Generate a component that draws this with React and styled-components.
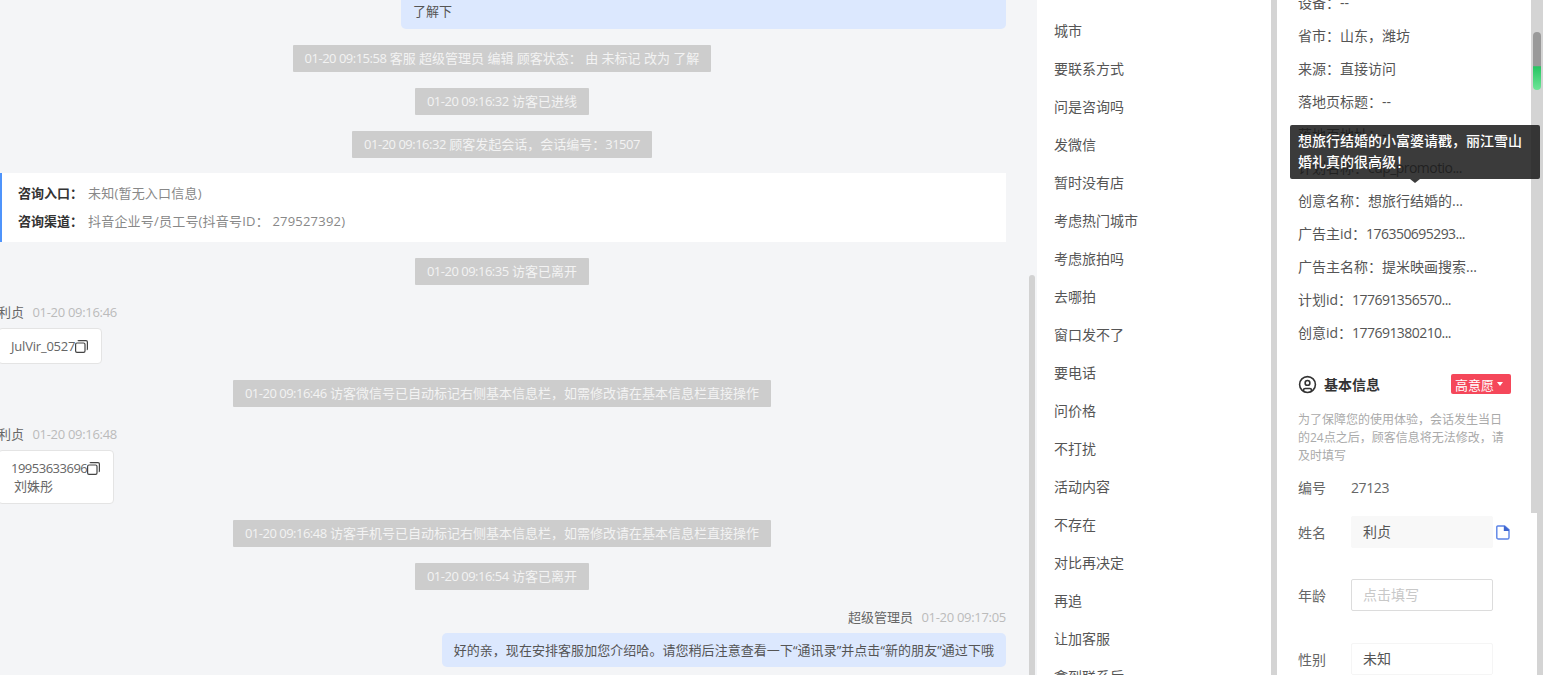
import React from "react";
import styled, { createGlobalStyle } from "styled-components";
import { CircleUser } from "lucide-react";

const TAGS = [
  "城市", "要联系方式", "问是咨询吗", "发微信", "暂时没有店", "考虑热门城市",
  "考虑旅拍吗", "去哪拍", "窗口发不了", "要电话", "问价格", "不打扰",
  "活动内容", "不存在", "对比再决定", "再追", "让加客服", "拿到联系后",
];

const DETAILS = [
  ["设备：", "--"],
  ["省市：", "山东，潍坊"],
  ["来源：", "直接访问"],
  ["落地页标题：", "--"],
  ["落地页地址：", "--"],
  ["计划名称：", "cup_promotio...", true],
  ["创意名称：", "想旅行结婚的..."],
  ["广告主id：", "176350695293...", true],
  ["广告主名称：", "提米映画搜索..."],
  ["计划id：", "177691356570...", true],
  ["创意id：", "177691380210...", true],
];

const CopyIcon = () => (
  <svg width="13" height="13" viewBox="0 0 13 13" fill="none" stroke="#444" strokeWidth="1.2">
    <rect x="0.6" y="3" width="9.4" height="9.4" rx="1.4" />
    <path d="M3 1.2 A0.8 0.8 0 0 1 3.8 0.6 H11 A1.4 1.4 0 0 1 12.4 2 V9 A0.8 0.8 0 0 1 11.8 9.8" />
  </svg>
);

const DocIcon = () => (
  <svg width="14" height="15" viewBox="0 0 14 15" fill="none">
    <path d="M1.8 1 H8.6 L13 4.8 V12.4 A1.6 1.6 0 0 1 11.4 14 H2.4 A1.6 1.6 0 0 1 0.8 12.4 V2 A1 1 0 0 1 1.8 1 Z" stroke="#5b83e6" strokeWidth="1.4" />
    <path d="M7.8 1 V6 H13 V4.8 L8.6 1 Z" fill="#3f66cf" />
  </svg>
);

// the stamp and trailing digits run wider in Open Sans, so they get tightened
const SystemLine = ({ stamp, text, tail }) => (
  <SystemPill>
    <Stamp>{stamp}</Stamp> {text}
    {tail && <Stamp>{tail}</Stamp>}
  </SystemPill>
);

const App = () => {
  return (
    <Page>
      <GlobalStyle />
      <ChatColumn>
        <Feed>
          <AgentBubble $wide>
            您好，这边是我们的活动内容，您可以先
            <br />
            了解下
          </AgentBubble>
          <SystemLine stamp="01-20 09:15:58" text="客服 超级管理员 编辑 顾客状态： 由 未标记 改为 了解" />
          <SystemLine stamp="01-20 09:16:32" text="访客已进线" />
          <SystemLine stamp="01-20 09:16:32" text="顾客发起会话，会话编号：" tail="31507" />
          <ConsultCard>
            <ConsultRow>
              <b>咨询入口：</b>
              <span>未知(暂无入口信息)</span>
            </ConsultRow>
            <ConsultRow>
              <b>咨询渠道：</b>
              <span>抖音企业号/员工号(抖音号ID： 279527392)</span>
            </ConsultRow>
          </ConsultCard>
          <SystemLine stamp="01-20 09:16:35" text="访客已离开" />
          <Message>
            <MetaRow>
              利贞 <MetaTime>01-20 09:16:46</MetaTime>
            </MetaRow>
            <VisitorCard>
              <CopyLine $spacing={-0.2}>
                JulVir_0527
                <CopyIcon />
              </CopyLine>
            </VisitorCard>
          </Message>
          <SystemLine stamp="01-20 09:16:46" text="访客微信号已自动标记右侧基本信息栏，如需修改请在基本信息栏直接操作" />
          <Message>
            <MetaRow>
              利贞 <MetaTime>01-20 09:16:48</MetaTime>
            </MetaRow>
            <VisitorCard>
              <CopyLine $spacing={-0.5}>
                19953633696
                <CopyIcon />
              </CopyLine>
              <NameLine>刘姝彤</NameLine>
            </VisitorCard>
          </Message>
          <SystemLine stamp="01-20 09:16:48" text="访客手机号已自动标记右侧基本信息栏，如需修改请在基本信息栏直接操作" />
          <SystemLine stamp="01-20 09:16:54" text="访客已离开" />
          <Message $mine>
            <MetaRow>
              超级管理员 <MetaTime>01-20 09:17:05</MetaTime>
            </MetaRow>
            <AgentBubble>好的亲，现在安排客服加您介绍哈。请您稍后注意查看一下“通讯录”并点击“新的朋友”通过下哦</AgentBubble>
          </Message>
        </Feed>
        <ChatGutter>
          <GutterThumb />
        </ChatGutter>
      </ChatColumn>

      <TagColumn>
        {TAGS.map((tag) => (
          <TagItem key={tag}>{tag}</TagItem>
        ))}
      </TagColumn>
      <Divider />

      <InfoColumn>
        <InfoBody>
          {DETAILS.map(([label, value, tight]) => (
            <DetailRow key={label}>
              {label}
              <DetailValue $tight={tight}>{value}</DetailValue>
            </DetailRow>
          ))}
          <SectionHead>
            <SectionTitle>
              <CircleUser size={19} strokeWidth={2} color="#333" />
              基本信息
            </SectionTitle>
            <IntentBadge>
              高意愿
              <Caret />
            </IntentBadge>
          </SectionHead>
          <Note>为了保障您的使用体验，会话发生当日的24点之后，顾客信息将无法修改，请及时填写</Note>
          <IdRow>
            <FieldLabel>编号</FieldLabel>
            <IdValue>27123</IdValue>
          </IdRow>
          <FieldRow>
            <FieldLabel>姓名</FieldLabel>
            <FieldBox $variant="filled">利贞</FieldBox>
            <DocSlot>
              <DocIcon />
            </DocSlot>
          </FieldRow>
          <FieldRow>
            <FieldLabel>年龄</FieldLabel>
            <FieldBox $variant="empty">点击填写</FieldBox>
          </FieldRow>
          <FieldRow>
            <FieldLabel>性别</FieldLabel>
            <FieldBox $variant="plain">未知</FieldBox>
          </FieldRow>
        </InfoBody>
        <InnerTrack>
          <GreenThumb />
        </InnerTrack>
        <OuterTrack />
        <Tooltip>想旅行结婚的小富婆请戳，丽江雪山婚礼真的很高级！</Tooltip>
      </InfoColumn>
    </Page>
  );
};

const GlobalStyle = createGlobalStyle`
    html, body {
        margin: 0;
        padding: 0;
        background: #f4f5f7;
        overflow: hidden;
    }
    * {
        box-sizing: border-box;
    }
    body {
        font-family: "Open Sans", "Noto Sans CJK SC", sans-serif;
        font-size: 13px;
    }
`;

const Page = styled.div`
    display: flex;
    width: 1543px;
    height: 675px;
    overflow: hidden;
`;

const ChatColumn = styled.div`
    display: flex;
    width: 1037px;
    flex: none;
    background: #f4f5f7;
`;

const Feed = styled.div`
    width: 1008px;
    height: 1200px;
    flex: none;
    margin: -28px 23px 0 -2px;
    display: flex;
    flex-direction: column;
    align-items: center;
    gap: 16px;
`;

const ChatGutter = styled.div`
    width: 6px;
    flex: none;
    padding-top: 275px;
`;

const GutterThumb = styled.div`
    width: 6px;
    height: 400px;
    background: #d2d2d2;
    border-radius: 3px 3px 0 0;
`;

const AgentBubble = styled.div`
    align-self: flex-end;
    width: ${(props) => (props.$wide ? "605px" : "auto")};
    padding: 6px 12px ${(props) => (props.$wide ? "7px" : "6px")};
    line-height: 22px;
    letter-spacing: 0.05px;
    color: #555;
    background: #dce8fe;
    border-radius: 5px;
    white-space: nowrap;
`;

const SystemPill = styled.div`
    height: 27px;
    padding: 0 12px;
    line-height: 27px;
    color: #f3f3f3;
    background: #cdcdcd;
    white-space: nowrap;
    border-radius: 1px;
`;

const Stamp = styled.span`
    letter-spacing: -0.5px;
`;

const ConsultCard = styled.div`
    align-self: stretch;
    margin: -1px 0 0 2px;
    padding: 6px 0 7px 16px;
    background: #fff;
    border-left: 2px solid #4f94fb;
`;

const ConsultRow = styled.div`
    line-height: 28px;
    color: #888;

    b {
        margin-right: 5px;
        color: #333;
        font-weight: 700;
    }

    span {
        letter-spacing: 0.2px;
    }
`;

const Message = styled.div`
    align-self: stretch;
    display: flex;
    flex-direction: column;
    align-items: ${(props) => (props.$mine ? "flex-end" : "flex-start")};
`;

const MetaRow = styled.div`
    line-height: 22px;
    margin-bottom: 5px;
    color: #666;
`;

const MetaTime = styled.span`
    margin-left: 5px;
    color: #bbb;
    letter-spacing: -0.3px;
`;

const VisitorCard = styled.div`
    padding: 8px 13px 8px 12px;
    color: #666;
    line-height: 18px;
    background: #fff;
    border: 1px solid #e4e4e4;
    border-radius: 4px;
`;

const CopyLine = styled.div`
    display: flex;
    align-items: center;
    letter-spacing: ${(props) => props.$spacing}px;
`;

const NameLine = styled.div`
    padding-left: 3px;
`;

const TagColumn = styled.div`
    width: 234px;
    flex: none;
    padding: 12px 0 0 17px;
    background: #fff;
`;

const TagItem = styled.div`
    height: 38px;
    line-height: 38px;
    font-size: 14px;
    color: #555;
`;

const Divider = styled.div`
    width: 6px;
    flex: none;
    background: #d4d4d4;
`;

const InfoColumn = styled.div`
    position: relative;
    display: flex;
    align-items: flex-start;
    flex: 1;
    background: #fff;
`;

const InfoBody = styled.div`
    width: 254px;
    flex: none;
    margin-top: -14px;
    padding: 0 20px 0 21px;
    font-size: 14px;
    color: #555;
`;

const DetailRow = styled.div`
    height: 33px;
    line-height: 33px;
    white-space: nowrap;
`;

const DetailValue = styled.span`
    letter-spacing: ${(props) => (props.$tight ? "-0.55px" : "0")};
`;

const SectionHead = styled.div`
    display: flex;
    align-items: center;
    justify-content: space-between;
    height: 20px;
    margin-top: 25px;
`;

const SectionTitle = styled.div`
    display: flex;
    align-items: center;
    gap: 7px;
    font-weight: 700;
    color: #333;
`;

const IntentBadge = styled.div`
    display: flex;
    align-items: center;
    gap: 3px;
    width: 60px;
    height: 20px;
    padding-left: 4px;
    font-size: 13px;
    color: #fff;
    background: #f5475a;
    border-radius: 2px;
`;

const Caret = styled.span`
    width: 0;
    height: 0;
    border-left: 3.5px solid transparent;
    border-right: 3.5px solid transparent;
    border-top: 4px solid #fff;
`;

const Note = styled.div`
    margin-top: 17px;
    font-size: 12px;
    line-height: 18px;
    color: #aaa;
`;

const IdRow = styled.div`
    display: flex;
    align-items: center;
    height: 24px;
    margin-top: 10px;
    color: #666;
`;

const IdValue = styled.span`
    letter-spacing: -0.4px;
`;

const FieldLabel = styled.span`
    width: 53px;
    flex: none;
    color: #666;
`;

const FieldRow = styled.div`
    display: flex;
    align-items: center;
    height: 32px;
    margin-top: 17px;
    margin-bottom: 31px;

    & + & {
        margin-top: 0;
        margin-bottom: 32px;
    }
`;

const FieldBox = styled.div`
    width: 142px;
    height: 32px;
    flex: none;
    padding: 0 11px;
    line-height: 30px;
    border-radius: 2px;
    color: ${(props) => (props.$variant === "empty" ? "#c8c8c8" : "#555")};
    background: ${(props) => (props.$variant === "filled" ? "#f8f8f8" : "#fff")};
    border: 1px solid
        ${(props) =>
          props.$variant === "filled" ? "#f8f8f8" : props.$variant === "empty" ? "#dcdcdc" : "#f5f5f5"};
`;

const DocSlot = styled.span`
    display: flex;
    margin-left: 3px;
`;

const InnerTrack = styled.div`
    position: relative;
    width: 6px;
    height: 513px;
    flex: none;
    background: #d4d4d4;
`;

const GreenThumb = styled.div`
    position: absolute;
    top: 32px;
    left: 2px;
    width: 8px;
    height: 58px;
    border-radius: 4px;
    background: linear-gradient(#999 0, #999 58%, #27c562 60%, #6fe598 100%);
`;

const OuterTrack = styled.div`
    width: 6px;
    height: 675px;
    flex: none;
    background: #d4d4d4;
`;

const Tooltip = styled.div`
    position: absolute;
    top: 125px;
    left: 13px;
    width: 250px;
    padding: 5px 8px 7px;
    font-size: 14px;
    font-weight: 500;
    line-height: 21px;
    color: #fff;
    background: rgba(25, 25, 25, 0.85);
    border-radius: 2px;

    &::after {
        content: "";
        position: absolute;
        left: 120px;
        bottom: -4px;
        border-left: 5px solid transparent;
        border-right: 5px solid transparent;
        border-top: 4px solid rgba(25, 25, 25, 0.85);
    }
`;

export default App;
